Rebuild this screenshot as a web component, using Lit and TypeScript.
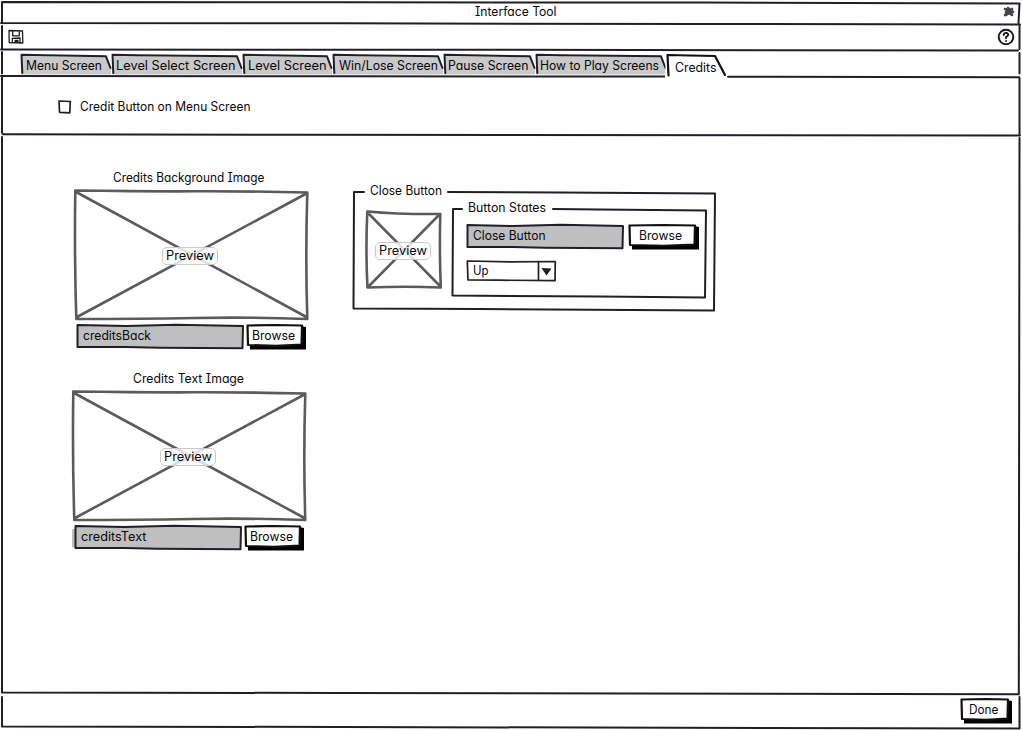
import { LitElement, html, svg, css, nothing } from "lit";
import { customElement, property } from "lit/decorators.js";
import { styleMap } from "lit/directives/style-map.js";

const sharedStyles = css`
  :host { display: block; }
  .stack { display: grid; align-items: start; justify-items: start; }
  .stack > * { grid-area: 1 / 1; }
  svg { display: block; overflow: visible; fill: none; stroke-linecap: round; stroke-linejoin: round; }
  .ink { stroke: #1f2027; stroke-width: 2; }
  .fine { stroke: #1f2027; stroke-width: 1.7; }
  .thick { stroke: #101014; stroke-width: 2.2; }
  .pencil { stroke: #5b5b5d; stroke-width: 2.6; }
  .grey { fill: #bfbfbf; }
  .paper { fill: #fff; }
  .solid { fill: #000; }
`;

// Artwork uses page coordinates; the viewBox starts at the box's own origin.
const art = (x: number, y: number, w: number, h: number, content: unknown) =>
  html`<svg width=${w} height=${h} viewBox="${x} ${y} ${w} ${h}">${content}</svg>`;

@customElement("sketch-label")
class SketchLabel extends LitElement {
  @property() text = "";
  @property({ type: Number }) width = 50;
  static styles = css`
    :host { display: block; }
    svg { display: block; overflow: visible; }
    text { font: 400 12.5px Inter, "Noto Sans", sans-serif; font-feature-settings: "cv11", "cv08"; fill: #08080a; }
  `;
  render() {
    return html`<svg width=${this.width} height="16"><text x="0" y="12" textLength=${this.width} lengthAdjust="spacingAndGlyphs">${this.text}</text></svg>`;
  }
}

@customElement("sketch-picture")
class SketchPicture extends LitElement {
  @property({ type: Boolean }) small = false;
  static styles = [sharedStyles, css`
    .stack { justify-content: start; justify-items: center; align-items: center; }
    .pill { box-sizing: border-box; width: 56px; height: 18px; padding: 0 0 0 3px; border: 1px solid #c9c9c9; border-radius: 5px; background: rgba(255, 255, 255, 0.8); }
    .large-pill { margin-left: -4px; margin-top: 0; }
    .small-pill { margin-left: -3px; margin-top: 1px; }
  `];
  render() {
    const lines = this.small
      ? svg`<path class="pencil" d="M.3 .5Q34 3.500 73.300 3Q72.300 40 73.800 76.500Q40 75 .5 76.500Q-1.500 40 .3 .5M2.500 3.500L72.500 74.500M71.500 4.500L2.500 74.500"/>`
      : svg`<path class="pencil" d="M.3 .5Q70 1.500 120 1.300T232.300 2.500Q230.300 66 232.300 129Q175 127 120 128T1.300 129Q-.7 65 .3 .5M2 2.500L230.500 126.500M230.500 4L2 127"/>`;
    return html`<div class="stack">
      ${art(0, 0, this.small ? 75 : 234, this.small ? 78 : 131, lines)}
      <div class="pill ${this.small ? "small-pill" : "large-pill"}"><sketch-label text="Preview" width="48"></sketch-label></div>
    </div>`;
  }
}

@customElement("sketch-field")
class SketchField extends LitElement {
  @property() text = "";
  @property({ type: Number }) width = 168;
  @property({ type: Number }) textwidth = 68;
  @property({ type: Boolean }) bleed = false;
  static styles = [sharedStyles, css`sketch-label { margin: 4px 0 0 6.5px; }`];
  render() {
    const r = this.width - 1;
    return html`<div class="stack">
      ${art(0, 0, this.width, 25, svg`
        ${this.bleed ? svg`<path class="grey" d="M-2 4H2V22.500H-2Z"/>` : nothing}
        <path class="ink grey" d="M1.500 1L${r * 0.3} 2L${r * 0.6} .8L${r} 2L${r - 0.5} 24.300L${r * 0.5} 23.800L${r * 0.3} 23L1.500 23Z"/>`)}
      <sketch-label .text=${this.text} .width=${this.textwidth}></sketch-label>
    </div>`;
  }
}

@customElement("sketch-button")
class SketchButton extends LitElement {
  @property() text = "";
  @property({ type: Number }) width = 60;
  @property({ type: Number }) textwidth = 43;
  @property({ type: Number }) indent = 6;
  static styles = sharedStyles;
  render() {
    const w = this.width;
    return html`<div class="stack">
      ${art(0, 0, w, 26, svg`<path class="solid" d="M4 20L${w - 5} 20L${w - 5} 2L${w} 3L${w} 25.500L4 25.500Z"/><path class="thick paper" d="M1.500 1.500L${w * 0.5} 1L${w - 4} 1.500L${w - 4.5} 20.500L${w * 0.5} 21.800L2 21Z"/>`)}
      <sketch-label style=${styleMap({ marginLeft: `${this.indent}px`, marginTop: "4px" })} .text=${this.text} .width=${this.textwidth}></sketch-label>
    </div>`;
  }
}

interface Tab { text: string; x: number; w: number; end: number; tx: number; tw: number; active?: boolean }

const TABS: Tab[] = [
  { text: "Menu Screen", x: 21, w: 91, end: 106, tx: 26, tw: 76 },
  { text: "Level Select Screen", x: 112, w: 131, end: 237, tx: 116, tw: 119.5 },
  { text: "Level Screen", x: 243, w: 90, end: 327, tx: 248, tw: 78.5 },
  { text: "Win/Lose Screen", x: 333, w: 111, end: 438, tx: 338.5, tw: 99 },
  { text: "Pause Screen", x: 444, w: 92, end: 530, tx: 448, tw: 80.5 },
  { text: "How to Play Screens", x: 536, w: 131, end: 661, tx: 540, tw: 119 },
  { text: "Credits", x: 667, w: 60, end: 715, tx: 674.5, tw: 41.5, active: true },
];

@customElement("app-root")
class AppRoot extends LitElement {
  static styles = [sharedStyles, css`
    :host { width: 1022px; height: 730px; background: #fff; overflow: hidden; }
    .page { display: grid; grid-template-rows: 23px 27px 26px 59px 558px 37px; }
    .stack { min-width: 0; min-height: 0; }
    .title { margin: 4px 0 0 474.5px; }
    .tools { display: flex; width: 1014px; justify-content: space-between; padding: 5px 0 0 8px; box-sizing: border-box; }
    .tabs { display: flex; padding-left: 21px; }
    .option { display: flex; gap: 8.5px; padding: 23px 0 0 58px; }
    .content { display: flex; align-items: flex-start; padding-left: 73px; }
    .images { width: 280px; padding-top: 35px; }
    .first { padding-left: 2px; }
    .second { margin-top: 21px; }
    .caption-a { margin: 0 0 4px 37.5px; }
    .caption-b { margin: 0 0 4px 59.5px; }
    .file { display: flex; gap: 2px; padding: 3px 0 0 1px; }
    .group { margin-top: 48px; }
    .legend { margin-left: 16.5px; }
    .states-legend { margin: -8px 0 0 16px; }
    .inside { display: flex; padding: 28px 0 0 14px; gap: 10px; }
    .states-group { margin-top: -3px; }
    .states { padding: 16px 0 0 14px; }
    .row { display: flex; gap: 4px; }
    .combo { margin-top: 10px; }
    .combo-text { margin: 3px 0 0 7px; }
    .done { margin: 5px 0 0 960px; }
  `];

  tab(t: Tab) {
    const { x, end } = t;
    const drawing = t.active
      ? svg`<path fill="#fff" d="M666 55L715 56L726 78L665 78Z"/><path class="thick" d="M668.500 75.500L667.500 55L690 55.500L${end} 56L725 75"/>`
      : svg`<path fill="#c9c9c9" d="M${x} 56L${end} 57L${x + t.w - 1} 68V74.500H${x}Z"/><path class="ink" d="M${x + 1.3} 73L${x + 0.5} 54.800L${x + 25} 55.300L${end} 56.300L${x + t.w - 1.5} 68"/>`;
    return html`<div class="stack">
      ${art(x, 50, t.w, 26, drawing)}
      <sketch-label style=${styleMap({ marginLeft: `${t.tx - x}px`, marginTop: t.active ? "10px" : "8px" })} .text=${t.text} .width=${t.tw}></sketch-label>
    </div>`;
  }

  render() {
    return html`<div class="page">
      <header class="stack">
        ${art(0, 0, 1022, 23, svg`<path class="ink" d="M2 22V2L340 2.300L700 2.500L1019.500 3.500L1018.500 23M1 23L340 23.300L700 24L1020 24.500"/><path stroke="#45454f" stroke-width="2.600" d="M1005 9L1008 10L1012 15L1009 13L1006 15M1012 9L1005 15M1008 8L1013 12M1006 12H1012"/>`)}
        <sketch-label class="title" text="Interface Tool" width="81.500"></sketch-label>
      </header>
      <div class="stack">
        ${art(0, 23, 1022, 27, svg`<path class="ink" d="M2 26V49.300M1019.500 26V49M1 49.500L500 49.800L1018 50.500"/>`)}
        <div class="tools">
          ${art(8, 28, 16, 18, svg`<path stroke="#1d1d22" stroke-width="1.300" d="M9 30.500L22.500 31L22.800 43L9.200 42.500ZM12.700 31V35.800H19.300V31.300M12.300 42.500V38.300L20 38V42.500"/><path fill="#1d1d22" d="M14.500 39.800H18.500V42.500H14.500Z"/>`)}
          ${art(998, 28, 16, 18, svg`<circle cx="1006" cy="37" r="7.300" stroke="#17171a" stroke-width="1.900"/><path stroke="#17171a" stroke-width="1.900" d="M1003.700 35Q1004 32.800 1006.200 32.900Q1008.500 33.200 1008.200 35.200Q1007.600 36.400 1006 37.100V38.200M1006 41V41.100"/>`)}
        </div>
      </div>
      <nav class="stack">
        ${art(0, 50, 1022, 26, svg`<path class="ink" d="M2 52V73.500M1019.500 53V73.500M1 76L340 76.300L665 76.600M728 76.700L1019 77.300"/>`)}
        <div class="tabs">${TABS.map((t) => this.tab(t))}</div>
      </nav>
      <section class="stack">
        ${art(0, 76, 1022, 59, svg`<path class="ink" d="M2 77V133M1019.500 78V134M3 134.200L300 134.800L1020 135.500"/>`)}
        <div class="option">
          ${art(58, 99, 13, 16, svg`<path class="fine" d="M59 101L70.300 101.500L69.800 112.800L59.500 112.300Z"/>`)}
          <sketch-label text="Credit Button on Menu Screen" width="170.500"></sketch-label>
        </div>
      </section>
      <main class="stack">
        ${art(0, 135, 1022, 558, svg`<path class="ink" d="M2 137V692M1019.500 138L1018.800 693M2 692.500L340 693L1019 694.300"/>`)}
        <div class="content">
          <div class="images">
            <div class="first">
              <sketch-label class="caption-a" text="Credits Background Image" width="151.500"></sketch-label>
              <sketch-picture></sketch-picture>
              <div class="file"><sketch-field text="creditsBack"></sketch-field><sketch-button text="Browse"></sketch-button></div>
            </div>
            <div class="second">
              <sketch-label class="caption-b" text="Credits Text Image" width="111"></sketch-label>
              <sketch-picture></sketch-picture>
              <div class="file"><sketch-field bleed text="creditsText" textwidth="65.500"></sketch-field><sketch-button text="Browse"></sketch-button></div>
            </div>
          </div>
          <div class="group stack">
            ${art(353, 183, 363, 129, svg`<path class="ink" d="M364 192H354L353.500 308.500L480 309L714 310.500L715 193.500L560 192.500L448 192"/>`)}
            <sketch-label class="legend" text="Close Button" width="72"></sketch-label>
            <div class="inside">
              <sketch-picture small></sketch-picture>
              <div class="stack states-group">
                ${art(452, 208, 255, 90, svg`<path class="ink" d="M462 209H453L452.500 295.500L600 296.500L705 297.500L706 210.500L600 209.500L553 209"/>`)}
                <sketch-label class="states-legend" text="Button States" width="78"></sketch-label>
                <div class="states">
                  <div class="row"><sketch-field text="Close Button" width="158" textwidth="72.500"></sketch-field><sketch-button text="Browse" width="71" indent="11"></sketch-button></div>
                  <div class="combo stack">
                    ${art(466, 260, 91, 22, svg`<path class="fine paper" d="M467.300 261L510 261.800L555.300 261.500L555 280.700L500 280.200L468 280ZM538.500 262V280"/><path fill="#1d1d22" d="M541.500 268L551.500 268.500L546.500 275.500Z"/>`)}
                    <sketch-label class="combo-text" text="Up" width="15.500"></sketch-label>
                  </div>
                </div>
              </div>
            </div>
          </div>
        </div>
      </main>
      <footer class="stack">
        ${art(0, 693, 1022, 37, svg`<path class="ink" d="M2 697V726.500L340 727L1019.500 728.500V697"/>`)}
        <sketch-button class="done" text="Done" width="52" textwidth="29.500" indent="9"></sketch-button>
      </footer>
    </div>`;
  }
}
